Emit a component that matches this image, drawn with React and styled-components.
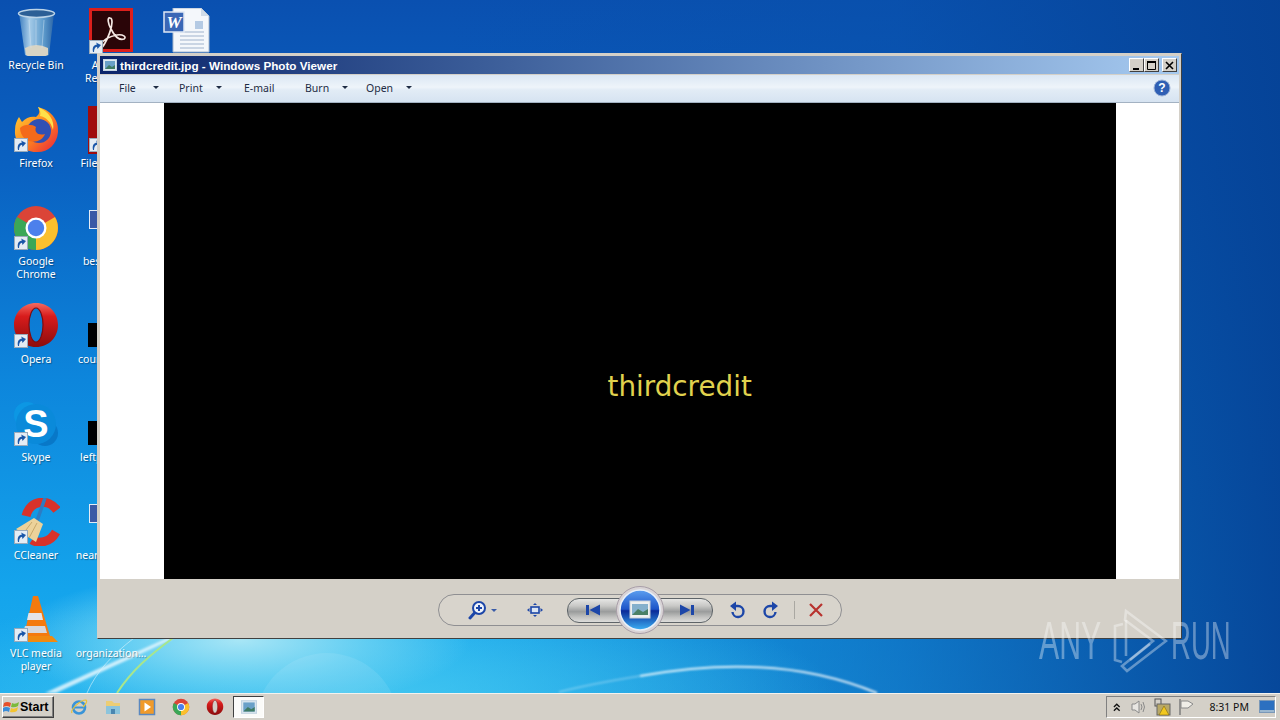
import React from 'react'
import styled, { createGlobalStyle } from 'styled-components'

const Global = createGlobalStyle`
html, body { margin: 0; padding: 0; width: 1280px; height: 720px; overflow: hidden; }
* { box-sizing: border-box; }
body { font-family: "Noto Sans", "Liberation Sans", sans-serif; }
`

const Screen = styled.div`
width: 1280px;
height: 720px;
display: flex;
flex-direction: column;
`

const Desktop = styled.div`
position: relative;
height: 693px;
overflow: hidden;
background:
  radial-gradient(ellipse 230px 70px at 240px 640px, #a8e6f6 0%, rgba(130,220,245,.6) 55%, rgba(80,200,240,0) 100%),
  radial-gradient(ellipse 480px 120px at 360px 700px, rgba(70,200,240,.9) 0%, rgba(40,170,235,0) 100%),
  linear-gradient(90deg, rgba(8,70,160,0) 35%, rgba(8,80,170,.55) 70%, rgba(5,66,150,.95) 100%),
  linear-gradient(180deg, #0a50b0 0%, #0a62c2 25%, #0d86dc 55%, #14a4ec 85%, #1cacee 100%);
`

const Wallpaper = styled.svg`
position: absolute;
left: 0;
top: 0;
`

const IconGrid = styled.div`
position: relative;
display: grid;
grid-auto-flow: column;
grid-template-rows: repeat(7, 98px);
grid-template-columns: 76px 74px 76px;
padding-top: 8px;
margin-left: -2px;
`

const Cell = styled.div`
grid-column: ${p => p.$col || 'auto'};
grid-row: ${p => p.$row || 'auto'};
display: flex;
flex-direction: column;
align-items: center;
`

const IconBox = styled.div`
position: relative;
width: 48px;
height: 48px;
`

const Badge = styled.svg`
position: absolute;
left: 2px;
bottom: 2px;
`

const Label = styled.div`
margin-top: 3px;
width: 100%;
text-align: center;
font-size: 10.5px;
line-height: 13px;
color: #fff;
white-space: pre-line;
text-shadow: 1px 1px 1px rgba(0,0,0,.35);
`

const Window = styled.div`
position: absolute;
left: 97px;
top: 53px;
width: 1085px;
height: 586px;
padding: 2px;
display: flex;
flex-direction: column;
background: #d4d0c8;
border-top: 1px solid #d4d0c8;
border-left: 1px solid #d4d0c8;
border-right: 1px solid #404040;
border-bottom: 1px solid #404040;
`

const TitleBar = styled.div`
height: 18px;
flex: none;
display: flex;
align-items: center;
padding: 0 2px 0 3px;
margin-bottom: 1px;
background: linear-gradient(90deg, #0a246a 0%, #3a5c98 35%, #a6caf0 100%);
`

const TitleText = styled.div`
margin-left: 3px;
font-family: "Liberation Sans", sans-serif;
font-size: 11.7px;
font-weight: 700;
color: #fff;
`

const WinButtons = styled.div`
margin-left: auto;
display: flex;
`

const WinButton = styled.div`
width: 15px;
height: 14px;
margin-left: ${p => p.$ml || 0}px;
display: flex;
align-items: center;
justify-content: center;
background: #d4d0c8;
border: 1px solid;
border-color: #fff #404040 #404040 #fff;
`

const MenuBar = styled.div`
height: 28px;
flex: none;
display: flex;
align-items: center;
padding: 0 8px 2px 19px;
color: #1e2c44;
font-size: 10.5px;
background: linear-gradient(180deg, #dbe7f4 0%, #eef4fa 45%, #e2ecf6 55%, #d6e3f1 100%);
border-bottom: 1px solid #a3b2c2;
`

const MenuItem = styled.div`
width: ${p => p.$w}px;
display: flex;
align-items: center;
`

const Caret = styled.span`
margin-left: auto;
margin-right: ${p => p.$mr || 0}px;
width: 0;
height: 0;
border-left: 3px solid transparent;
border-right: 3px solid transparent;
border-top: 3px solid #1e2c44;
`

const HelpSlot = styled.div`
margin-left: auto;
display: flex;
`

const Content = styled.div`
flex: 1;
display: flex;
justify-content: center;
background: #fff;
`

const Photo = styled.div`
width: 952px;
background: #000;
padding: 268px 0 0 444px;
`

const PhotoText = styled.div`
font-family: "DejaVu Sans", sans-serif;
font-size: 27.8px;
line-height: 32px;
color: #e0d24e;
`

const Controls = styled.div`
height: 57px;
flex: none;
display: flex;
justify-content: center;
padding-top: 15px;
background: #d4d0c8;
`

const Pill = styled.div`
width: 404px;
height: 32px;
padding-left: 29px;
display: flex;
align-items: center;
border: 1px solid #8f8f92;
border-radius: 16px;
background: #d8d4cc;
`

const Tool = styled.div`
margin-left: ${p => p.$ml || 0}px;
display: flex;
align-items: center;
`

const Transport = styled.div`
position: relative;
width: 146px;
height: 25px;
margin-left: 23px;
padding: 0 17px;
display: flex;
align-items: center;
justify-content: space-between;
border: 1px solid #5e6468;
border-radius: 12px;
background: linear-gradient(180deg, #e6e6e4 0%, #c8c8c6 30%, #9a9c9c 55%, #c4c4c2 80%, #dcdcda 100%);
`

const Hub = styled.div`
position: absolute;
left: 50%;
top: 50%;
width: 48px;
height: 48px;
transform: translate(-50%, -50%);
`

const Divider = styled.div`
width: 1px;
height: 18px;
margin-left: 15px;
background: #aaa8a2;
`

const Taskbar = styled.div`
height: 27px;
flex: none;
display: flex;
align-items: center;
padding: 0 4px 0 2px;
background: #d4d0c8;
border-top: 1px solid #f4f2ee;
`

const StartButton = styled.div`
width: 52px;
height: 22px;
display: flex;
align-items: center;
font-family: "Liberation Sans", sans-serif;
font-size: 12.5px;
font-weight: 700;
color: #000;
border: 1px solid;
border-color: #fff #404040 #404040 #fff;
box-shadow: inset -1px -1px 0 #808080;
`

const Quick = styled.div`
display: flex;
align-items: center;
gap: 16px;
margin-left: 16px;
`

const TaskButton = styled.div`
width: 31px;
height: 22px;
margin-left: 9px;
display: flex;
align-items: center;
justify-content: center;
background: #fbfbf9;
border: 1px solid;
border-color: #404040 #fff #fff #404040;
`

const Tray = styled.div`
margin-left: auto;
width: 170px;
height: 22px;
display: flex;
align-items: center;
padding-left: 5px;
border: 1px solid;
border-color: #808080 #fff #fff #808080;
`

const TrayIcon = styled.div`
margin-left: ${p => p.$ml || 0}px;
display: flex;
`

const Clock = styled.div`
margin-left: 15px;
font-size: 10.5px;
color: #111;
white-space: nowrap;
`

const Watermark = styled.div`
position: absolute;
left: 1039px;
top: 608px;
display: flex;
align-items: center;
color: rgba(255,255,255,.36);
`

const MarkWord = styled.div`
width: ${p => p.$w}px;
margin-left: ${p => p.$ml || 0}px;
font-family: "Liberation Sans", sans-serif;
font-size: 53px;
line-height: 66px;
transform: scaleX(${p => p.$sx});
transform-origin: left center;
white-space: nowrap;
`

const Arrow = () => (
  <Badge width="14" height="14" viewBox="0 0 14 14">
    <rect x=".5" y=".5" width="13" height="13" fill="#e4ecf4" stroke="#9ab" />
    <path d="M4 12 C3 7 5 5 8 4.5 L7 2.5 L12 5 L8.5 9 L8 6.8 C6 7.2 5 9 5 12 Z" fill="#1a56a8" />
  </Badge>
)

const RecycleBin = () => (
  <svg width="48" height="48" viewBox="0 0 48 48">
    <defs>
      <linearGradient id="bin" x1="0" x2="1" y1="0" y2="0">
        <stop offset="0" stopColor="#3f7fc0" />
        <stop offset=".3" stopColor="#a5cbe8" />
        <stop offset=".7" stopColor="#5f9ccc" />
        <stop offset="1" stopColor="#2c66a8" />
      </linearGradient>
    </defs>
    <path d="M7 5 L42 5 L37 47 Q24 52 13 47 Z" fill="url(#bin)" />
    <path d="M13 40 Q24 34 36 40 L36 47 Q24 52 14 47 Z" fill="#d8d4c4" />
    <ellipse cx="24.5" cy="5.5" rx="18" ry="4" fill="#2c5f96" stroke="#bcd4e8" strokeWidth="1.5" />
    <path d="M17 12 L19 40 M24 12 L24 38 M32 12 L30 40" stroke="#cfe2f2" strokeOpacity=".5" />
  </svg>
)

const Acrobat = () => (
  <svg width="48" height="48" viewBox="0 0 48 48">
    <rect x="3.5" y="1.5" width="41" height="41" fill="#2a0508" stroke="#dc1f1c" strokeWidth="3" />
    <path d="M23 10 C20 9 21 16 24 21 C27 27 31 33 37 31 C40 29 36 26 30 27 C24 28 17 31 13 37 C10 42 15 41 18 35 C21 30 25 20 25 14 C25 11 24 10 23 10 Z" fill="none" stroke="#f4e8e4" strokeWidth="1.7" />
  </svg>
)

const WordDoc = () => (
  <svg width="48" height="48" viewBox="-1 0 48 48">
    <path d="M10 0 L38 0 L46 8 L46 44 L10 44 Z" fill="#f4f7fb" stroke="#a8b8cc" />
    <path d="M38 0 L38 8 L46 8 Z" fill="#cfdbe8" />
    <path d="M17 24 H41 M17 28 H41 M17 32 H41 M17 36 H41 M17 40 H41" stroke="#9fb2cc" />
    <rect x="32" y="13" width="8" height="8" fill="#b4cae4" />
    <rect x="1" y="4" width="20" height="20" fill="#3a67b6" stroke="#dfe8f4" strokeWidth="1.5" />
    <text x="11" y="20" textAnchor="middle" fontFamily="Liberation Serif" fontStyle="italic" fontWeight="700" fontSize="17" fill="#fff">W</text>
  </svg>
)

const Firefox = () => (
  <svg width="48" height="48" viewBox="0 0 48 48">
    <defs>
      <linearGradient id="ff" x1="0" x2="1" y1="0" y2="1">
        <stop offset="0" stopColor="#ffd33a" />
        <stop offset=".5" stopColor="#ff8a1e" />
        <stop offset="1" stopColor="#e8203c" />
      </linearGradient>
    </defs>
    <path d="M26 1 C38 4 47 13 46 26 C45 39 35 47 24 46 C12 46 2 37 3 24 C3 18 5 14 7 11 L10 16 C14 11 20 10 24 11 C28 8 28 5 26 1 Z" fill="url(#ff)" />
    <circle cx="27" cy="25" r="12" fill="#3050b4" />
    <path d="M8 22 C12 18 20 18 24 21 C22 26 26 30 33 28 C30 36 20 38 13 33 C10 30 8 26 8 22 Z" fill="#f46a1a" />
    <path d="M26 1 C37 6 43 14 41 24 C39 16 34 11 28 10 C29 7 28 4 26 1 Z" fill="#ffe04a" />
  </svg>
)

const Chrome = ({ size = 48 }) => (
  <svg width={size} height={size} viewBox="0 0 48 48">
    <circle cx="24" cy="24" r="22" fill="#db4437" />
    <path d="M24 24 L5 13 A22 22 0 0 0 24 46 Z" fill="#3aa757" />
    <path d="M24 24 L24 46 A22 22 0 0 0 43 13 Z" fill="#fbc02d" />
    <circle cx="24" cy="24" r="10.5" fill="#fff" />
    <circle cx="24" cy="24" r="8.2" fill="#4c80ec" />
  </svg>
)

const Opera = ({ size = 48 }) => (
  <svg width={size} height={size} viewBox="0 1 48 48">
    <defs>
      <linearGradient id={`op${size}`} x1="0" x2="0" y1="0" y2="1">
        <stop offset="0" stopColor="#f46a60" />
        <stop offset=".3" stopColor="#d81c1c" />
        <stop offset="1" stopColor="#8c0c0c" />
      </linearGradient>
    </defs>
    <path fillRule="evenodd" d="M24 2 C37 2 46 12 46 24 C46 36 37 46 24 46 C11 46 2 36 2 24 C2 12 11 2 24 2 Z M24 7 C20 7 17 15 17 24 C17 33 20 41 24 41 C28 41 31 33 31 24 C31 15 28 7 24 7 Z" fill={`url(#op${size})`} />
    <path d="M24 7 C20 7 17 15 17 24 C17 33 20 41 24 41 C28 41 31 33 31 24 C31 15 28 7 24 7 Z" fill="none" stroke="#7c0c10" strokeWidth="1.2" />
  </svg>
)

const Skype = () => (
  <svg width="48" height="48" viewBox="0 0 48 48">
    <circle cx="15" cy="15" r="13" fill="#0c97e4" />
    <circle cx="33" cy="33" r="13" fill="#0878c8" />
    <circle cx="24" cy="24" r="20" fill="#0a8ada" />
    <text x="24" y="37" textAnchor="middle" fontFamily="Liberation Sans" fontWeight="700" fontSize="38" fill="#fff">S</text>
  </svg>
)

const CCleaner = () => (
  <svg width="48" height="48" viewBox="0 0 48 48">
    <path d="M45 12 C36 0 18 2 14 18 M44 34 C38 45 26 46 20 42" fill="none" stroke="#d8322a" strokeWidth="9" />
    <path d="M33 0 L25 23" stroke="#2c7cc4" strokeWidth="3.5" />
    <path d="M22 20 L31 26 L24 44 L4 31 Z" fill="#ecd29a" />
    <path d="M11 36 L20 24 M17 40 L25 25" stroke="#c8a86a" />
  </svg>
)

const Vlc = () => (
  <svg width="48" height="48" viewBox="0 0 48 48">
    <path d="M24 0 L29 0 L41 40 L15 40 Z" fill="#f47a0e" transform="translate(-3 0)" />
    <path d="M16.5 17 L29.5 17 L31 24 L15 24 Z" fill="#e4e4ea" />
    <path d="M13 30 L33 30 L35 37 L11 37 Z" fill="#d8d8dc" />
    <path d="M7 40 H40 L46 46 H2 Z" fill="#f08a10" />
  </svg>
)

const Tile = ({ color = '#000', y = 21, h = 24 }) => (
  <svg width="48" height="48" viewBox="0 0 48 48">
    <rect x="1" y={y} width="40" height={h} fill={color} />
  </svg>
)

const PlainDoc = () => (
  <svg width="48" height="48" viewBox="0 0 48 48">
    <rect x="12" y="2" width="30" height="42" fill="#eef3fa" stroke="#a8b8cc" />
    <rect x="2.5" y="6.5" width="20" height="18" fill="#3a5aa6" stroke="#e4ecf6" />
  </svg>
)

const PhotoGlyph = ({ size = 14 }) => (
  <svg width={size} height={size} viewBox="0 0 14 14">
    <rect x=".5" y="1.5" width="13" height="11" fill="#dfe9f2" stroke="#c4d4e2" />
    <rect x="2" y="3" width="10" height="8" fill="#6aa0c8" />
    <path d="M2 11 L6 7 L9 9 L12 7 V11 Z" fill="#3f7a64" />
  </svg>
)

const ZoomIcon = () => (
  <svg width="29" height="20" viewBox="0 0 29 20">
    <circle cx="11" cy="8" r="6" fill="#eef2fa" stroke="#1c46a8" strokeWidth="2" />
    <path d="M11 5 V11 M8 8 H14" stroke="#1c46a8" strokeWidth="2" />
    <path d="M6.5 13 L2 18" stroke="#1c46a8" strokeWidth="3" strokeLinecap="round" />
    <path d="M23 9 H29 L26 12 Z" fill="#3a5ca8" />
  </svg>
)

const FitIcon = () => (
  <svg width="18" height="16" viewBox="0 0 18 16">
    <rect x="5" y="5" width="8" height="6" fill="#dce6f4" stroke="#1c46a8" strokeWidth="1.6" />
    <path d="M9 1 L11 3 H7 Z M9 15 L11 13 H7 Z M1 8 L3.5 6 V10 Z M17 8 L14.5 6 V10 Z" fill="#1c46a8" />
  </svg>
)

const SkipIcon = ({ flip }) => (
  <svg width="16" height="14" viewBox="0 0 16 14" style={flip ? { transform: 'scaleX(-1)' } : undefined}>
    <rect x="1" y="2" width="3" height="10" fill="#1c46a8" />
    <path d="M15 1.5 V12.5 L4.5 7 Z" fill="#1c46a8" />
  </svg>
)

const HubIcon = () => (
  <svg width="48" height="48" viewBox="0 0 48 48">
    <defs>
      <linearGradient id="hub" x1="0" x2="0" y1="0" y2="1">
        <stop offset="0" stopColor="#5c9ff0" />
        <stop offset=".48" stopColor="#1c54c8" />
        <stop offset=".52" stopColor="#0a2a98" />
        <stop offset="1" stopColor="#3cb0f4" />
      </linearGradient>
    </defs>
    <circle cx="24" cy="24" r="23.5" fill="#d9d4d6" stroke="#a89ea8" />
    <circle cx="24" cy="24" r="20" fill="url(#hub)" stroke="#e8f0fa" strokeWidth="1.5" />
    <rect x="14" y="15" width="20" height="17" fill="#eef0f0" stroke="#c8d0d8" />
    <rect x="16" y="18" width="16" height="11" fill="#84b0cc" />
    <path d="M16 29 L22 23 L27 26 L32 23 V29 Z" fill="#4a8066" />
  </svg>
)

const RotateIcon = ({ flip }) => (
  <svg width="16" height="18" viewBox="0 0 16 18" style={flip ? { transform: 'scaleX(-1)' } : undefined}>
    <path d="M5 5 H9 A5.5 5.5 0 1 1 3.5 11" fill="none" stroke="#1c46a8" strokeWidth="2.4" />
    <path d="M7 0.5 V10 L1 5 Z" fill="#1c46a8" />
  </svg>
)

const DeleteIcon = () => (
  <svg width="16" height="16" viewBox="0 0 16 16">
    <path d="M2 2 L14 14 M14 2 L2 14" stroke="#b8322e" strokeWidth="2.2" />
  </svg>
)

const HelpIcon = () => (
  <svg width="18" height="18" viewBox="0 0 18 18">
    <circle cx="9" cy="9" r="8" fill="#2f5fb4" stroke="#9fb4d8" />
    <text x="9" y="13" textAnchor="middle" fontFamily="Liberation Sans" fontWeight="700" fontSize="12" fill="#fff">?</text>
  </svg>
)

const WinFlag = () => (
  <svg width="17" height="16" viewBox="0 0 17 16">
    <path d="M1 4 Q4 2 8 4 L7 8 Q4 6 0 8 Z" fill="#e8502a" />
    <path d="M9 4 Q12 6 16 3 L15 7 Q12 9 8 8 Z" fill="#7cba3a" />
    <path d="M0 9 Q3 7 7 9 L6 13 Q3 11 0 13 Z" fill="#3a8cd8" />
    <path d="M8 9 Q11 11 15 8 L14 12 Q11 14 7 13 Z" fill="#f4c430" />
  </svg>
)

const IeIcon = () => (
  <svg width="18" height="18" viewBox="0 0 18 18">
    <circle cx="9" cy="9.5" r="6" fill="none" stroke="#3a94d8" strokeWidth="2.6" />
    <path d="M3 9.5 H15" stroke="#3a94d8" strokeWidth="2" />
    <path d="M2 15 C0 12 10 2 16 2 C18 3 15 7 13 9" fill="none" stroke="#e8c23a" strokeWidth="1.2" />
  </svg>
)

const FolderIcon = () => (
  <svg width="18" height="18" viewBox="0 0 18 18">
    <path d="M2 3 H8 L10 5 H16 V16 H2 Z" fill="#eccd74" />
    <rect x="2" y="8" width="14" height="8" fill="#8cc4dc" />
    <rect x="7" y="11" width="4" height="5" fill="#4a86b0" />
  </svg>
)

const PlayerIcon = () => (
  <svg width="18" height="18" viewBox="0 0 18 18">
    <rect x="1.5" y="1.5" width="15" height="15" fill="#f09a2a" stroke="#5a88c0" strokeWidth="1.5" />
    <path d="M6.5 4.5 L13 9 L6.5 13.5 Z" fill="#fff" />
  </svg>
)

const Chevrons = () => (
  <svg width="10" height="11" viewBox="0 0 10 11">
    <path d="M2 5 L5 2 L8 5 M2 9 L5 6 L8 9" fill="none" stroke="#111" strokeWidth="1.4" />
  </svg>
)

const Speaker = () => (
  <svg width="18" height="16" viewBox="0 0 18 16">
    <path d="M3 5 H6 L10 2 V14 L6 11 H3 Z" fill="#e8e6e2" stroke="#8a8a8a" />
    <path d="M12 5 Q14 8 12 11 M14 3 Q17 8 14 13" fill="none" stroke="#8a8a8a" />
  </svg>
)

const NetworkWarn = () => (
  <svg width="18" height="18" viewBox="0 0 18 18">
    <rect x="2" y="1" width="6" height="7" fill="none" stroke="#555" />
    <rect x="4" y="6" width="13" height="11" fill="#b8a868" stroke="#666" />
    <path d="M11 8 L16 17 H6 Z" fill="#f2c81e" stroke="#806a10" strokeWidth=".6" />
  </svg>
)

const FlagIcon = () => (
  <svg width="18" height="18" viewBox="0 0 18 18">
    <path d="M3 1 V17" stroke="#777" strokeWidth="1.4" />
    <path d="M4 3 H11 L16 6 L11 10 H4 Z" fill="#f0eee8" stroke="#8a8a8a" />
  </svg>
)

const ShowDesktop = () => (
  <svg width="16" height="14" viewBox="0 0 16 14">
    <rect x=".5" y=".5" width="15" height="12" fill="#2c70c0" stroke="#7a98b8" />
    <rect x="1" y="10" width="14" height="2" fill="#9cb8d0" />
  </svg>
)

const PlayMark = () => (
  <svg width="58" height="66" viewBox="0 0 58 66" fill="none" stroke="rgba(255,255,255,.36)" strokeWidth="2.6">
    <path d="M13 16 L5 18 V52 L12 54" />
    <path d="M16 3 L56 33 L17 63 L12 58 L43 33 L15 12 Z" />
    <path d="M20 52 L40 36" />
    <path d="M16 12 V48" />
  </svg>
)

const desktopIcons = [
  { label: 'Recycle Bin', art: <RecycleBin /> },
  { label: 'Firefox', art: <Firefox />, link: true },
  { label: 'Google\nChrome', art: <Chrome />, link: true },
  { label: 'Opera', art: <Opera />, link: true },
  { label: 'Skype', art: <Skype />, link: true },
  { label: 'CCleaner', art: <CCleaner />, link: true },
  { label: 'VLC media\nplayer', art: <Vlc />, link: true },
  { label: 'Acrobat\nReader DC', art: <Acrobat />, link: true },
  { label: 'File Explorer', art: <Tile color="#a00c0c" y={0} h={48} />, link: true },
  { label: 'bestpart.rtf', art: <PlainDoc /> },
  { label: 'courtfield.jpg', art: <Tile /> },
  { label: 'leftpaper.jpg', art: <Tile /> },
  { label: 'nearanimal.rtf', art: <PlainDoc /> },
  { label: 'organization...', art: null },
  { label: '', art: <WordDoc />, col: 3, row: 1 },
]

const menu = [
  { name: 'File', w: 60, mr: 20 },
  { name: 'Print', w: 65, mr: 22 },
  { name: 'E-mail', w: 61 },
  { name: 'Burn', w: 61, mr: 18 },
  { name: 'Open', w: 46, mr: 0 },
]

const App = () => (
  <Screen>
    <Global />
    <Desktop>
      <Wallpaper width="1280" height="693" viewBox="0 0 1280 693" fill="none">
        <defs>
          <filter id="soft"><feGaussianBlur stdDeviation=".8" /></filter>
        </defs>
        <circle cx="327" cy="725" r="72" fill="#fff" fillOpacity=".09" />
        <path d="M45 693 C90 672 130 655 172 636 L172 639 C130 659 90 677 56 693 Z" fill="#eefaff" fillOpacity=".8" filter="url(#soft)" />
        <path d="M87 693 C96 672 112 655 134 638" stroke="#d8f4fc" strokeOpacity=".6" />
        <path d="M117 693 C132 670 150 655 173 638" stroke="#a8e68c" strokeWidth="2" />
        <path d="M559 692 C590 684 615 680 640 676" stroke="#fff" strokeOpacity=".35" strokeWidth="1.5" filter="url(#soft)" />
        <path d="M640 676 C680 669 720 666 750 667 C800 668 840 678 877 693" stroke="#fff" strokeOpacity=".85" strokeWidth="2" filter="url(#soft)" />
      </Wallpaper>
      <IconGrid>
        {desktopIcons.map(item => (
          <Cell key={item.label || 'word'} $col={item.col} $row={item.row}>
            <IconBox>
              {item.art}
              {item.link && <Arrow />}
            </IconBox>
            <Label>{item.label}</Label>
          </Cell>
        ))}
      </IconGrid>
      <Window>
        <TitleBar>
          <PhotoGlyph />
          <TitleText>thirdcredit.jpg - Windows Photo Viewer</TitleText>
          <WinButtons>
            <WinButton>
              <svg width="9" height="9" viewBox="0 0 9 9"><rect x="1" y="7" width="6" height="2" fill="#000" /></svg>
            </WinButton>
            <WinButton>
              <svg width="9" height="9" viewBox="0 0 9 9"><path d="M.5 1.5 H8.5 V8.5 H.5 Z" fill="none" stroke="#000" /><rect y="0" width="9" height="2" fill="#000" /></svg>
            </WinButton>
            <WinButton $ml={3}>
              <svg width="9" height="9" viewBox="0 0 9 9"><path d="M1 1 L8 8 M8 1 L1 8" stroke="#000" strokeWidth="1.6" /></svg>
            </WinButton>
          </WinButtons>
        </TitleBar>
        <MenuBar>
          {menu.map(m => (
            <MenuItem key={m.name} $w={m.w}>
              {m.name}
              {m.mr !== undefined && <Caret $mr={m.mr} />}
            </MenuItem>
          ))}
          <HelpSlot><HelpIcon /></HelpSlot>
        </MenuBar>
        <Content>
          <Photo>
            <PhotoText>thirdcredit</PhotoText>
          </Photo>
        </Content>
        <Controls>
          <Pill>
            <Tool><ZoomIcon /></Tool>
            <Tool $ml={29}><FitIcon /></Tool>
            <Transport>
              <SkipIcon />
              <Hub><HubIcon /></Hub>
              <SkipIcon flip />
            </Transport>
            <Tool $ml={16}><RotateIcon /></Tool>
            <Tool $ml={18}><RotateIcon flip /></Tool>
            <Divider />
            <Tool $ml={13}><DeleteIcon /></Tool>
          </Pill>
        </Controls>
      </Window>
      <Watermark>
        <MarkWord $w={71} $sx={0.57}>ANY</MarkWord>
        <PlayMark />
        <MarkWord $w={60} $ml={3} $sx={0.52}>RUN</MarkWord>
      </Watermark>
    </Desktop>
    <Taskbar>
      <StartButton><WinFlag />Start</StartButton>
      <Quick>
        <IeIcon />
        <FolderIcon />
        <PlayerIcon />
        <Chrome size={18} />
        <Opera size={18} />
      </Quick>
      <TaskButton><PhotoGlyph size={16} /></TaskButton>
      <Tray>
        <Chevrons />
        <TrayIcon $ml={7}><Speaker /></TrayIcon>
        <TrayIcon $ml={6}><NetworkWarn /></TrayIcon>
        <TrayIcon $ml={6}><FlagIcon /></TrayIcon>
        <Clock>8:31 PM</Clock>
        <TrayIcon $ml={10}><ShowDesktop /></TrayIcon>
      </Tray>
    </Taskbar>
  </Screen>
)

export default App
